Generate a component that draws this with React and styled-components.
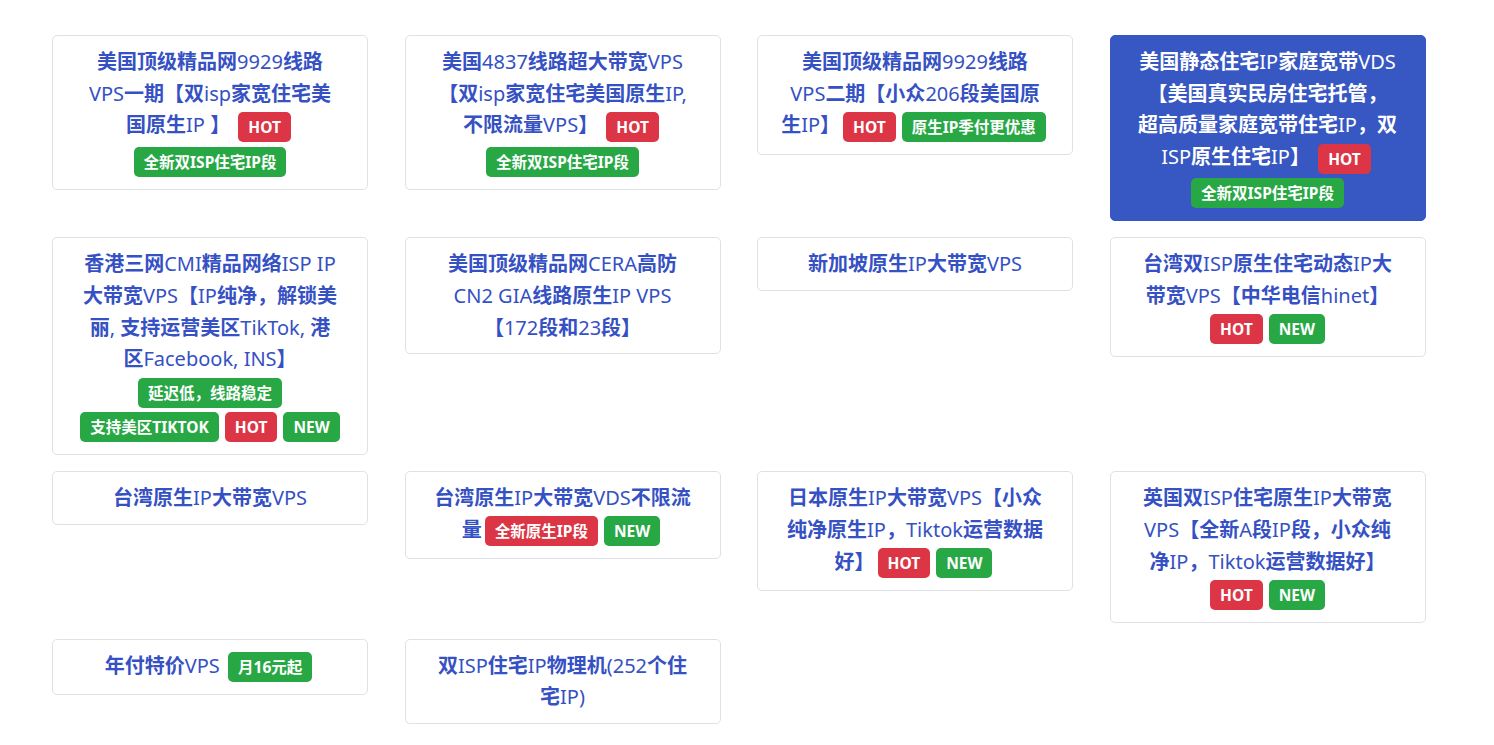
import styled, { createGlobalStyle } from 'styled-components'

const GlobalStyle = createGlobalStyle`
    html, body {
        margin: 0;
        padding: 0;
        background: #fff;
    }
    body {
        font-family: "Noto Sans", "Noto Sans CJK SC", sans-serif;
    }
`

const Page = styled.div`
    padding: 35px 0 0 52px;
    min-height: 745px;
    box-sizing: border-box;
`

const Grid = styled.div`
    display: grid;
    grid-template-columns: repeat(4, 316px);
    column-gap: 36.5px;
    row-gap: 16px;
    align-items: start;
`

const Card = styled.a`
    display: block;
    box-sizing: border-box;
    padding: 10px 14px;
    border: 1px solid ${p => (p.$active ? '#3757c2' : '#dee2e6')};
    border-radius: 5px;
    background: ${p => (p.$active ? '#3757c2' : '#fff')};
    color: ${p => (p.$active ? '#fff' : '#3551c3')};
    text-align: center;
    font-size: 20px;
    font-weight: 700;
    line-height: 31.7px;
    text-decoration: none;
    font-family: "Noto Sans", "Noto Sans CJK SC", sans-serif;
`

const Line = styled.div`
    white-space: pre;
`

// latin runs look regular weight next to the bold CJK
const Latin = styled.span`
    font-weight: 400;
`

const Badge = styled.span`
    display: inline-block;
    vertical-align: middle;
    margin: 2px 3px;
    padding: 0 10px;
    height: 30px;
    line-height: 30px;
    border-radius: 5px;
    font-size: 15.5px;
    font-weight: 700;
    color: #fff;
    background: ${p => (p.$tone === 'red' ? '#dc3545' : '#28a745')};
`

const HOT = { tag: 'HOT', tone: 'red' }
const NEW = { tag: 'NEW', tone: 'green' }
const g = tag => ({ tag, tone: 'green' })

const products = [
    { lines: ['美国顶级精品网9929线路', 'VPS一期【双isp家宽住宅美', ['国原生IP 】 ', HOT], [g('全新双ISP住宅IP段')]] },
    { lines: ['美国4837线路超大带宽VPS', '【双isp家宽住宅美国原生IP,', ['不限流量VPS】 ', HOT], [g('全新双ISP住宅IP段')]] },
    { lines: ['美国顶级精品网9929线路', 'VPS二期【小众206段美国原', ['生IP】', HOT, g('原生IP季付更优惠')]] },
    { active: true, lines: ['美国静态住宅IP家庭宽带VDS', '【美国真实民房住宅托管，', '超高质量家庭宽带住宅IP，双', ['ISP原生住宅IP】 ', HOT], [g('全新双ISP住宅IP段')]] },
    { lines: ['香港三网CMI精品网络ISP IP', '大带宽VPS【IP纯净，解锁美', '丽, 支持运营美区TikTok, 港', '区Facebook, INS】', [g('延迟低，线路稳定')], [g('支持美区TIKTOK'), HOT, NEW]] },
    { lines: ['美国顶级精品网CERA高防', 'CN2 GIA线路原生IP VPS', '【172段和23段】'] },
    { lines: ['新加坡原生IP大带宽VPS'] },
    { lines: ['台湾双ISP原生住宅动态IP大', '带宽VPS【中华电信hinet】', [HOT, NEW]] },
    { lines: ['台湾原生IP大带宽VPS'] },
    { lines: ['台湾原生IP大带宽VDS不限流', ['量', { tag: '全新原生IP段', tone: 'red' }, NEW]] },
    { lines: ['日本原生IP大带宽VPS【小众', '纯净原生IP，Tiktok运营数据', ['好】', HOT, NEW]] },
    { lines: ['英国双ISP住宅原生IP大带宽', 'VPS【全新A段IP段，小众纯', '净IP，Tiktok运营数据好】', [HOT, NEW]] },
    { lines: [['年付特价VPS ', g('月16元起')]] },
    { lines: ['双ISP住宅IP物理机(252个住', '宅IP)'] },
]

function Text({ value }) {
    return value.split(/([A-Za-z0-9 ()\-,.]+)/).map((part, i) =>
        i % 2 ? <Latin key={i}>{part}</Latin> : part
    )
}

function App() {
    return (
        <Page>
            <GlobalStyle />
            <Grid>
                {products.map((p, i) => (
                    <Card key={i} $active={p.active} href="#">
                        {p.lines.map((line, j) => (
                            <Line key={j}>
                                {[].concat(line).map((seg, k) =>
                                    typeof seg === 'string'
                                        ? <Text key={k} value={seg} />
                                        : <Badge key={k} $tone={seg.tone}>{seg.tag}</Badge>
                                )}
                            </Line>
                        ))}
                    </Card>
                ))}
            </Grid>
        </Page>
    )
}

export default App
